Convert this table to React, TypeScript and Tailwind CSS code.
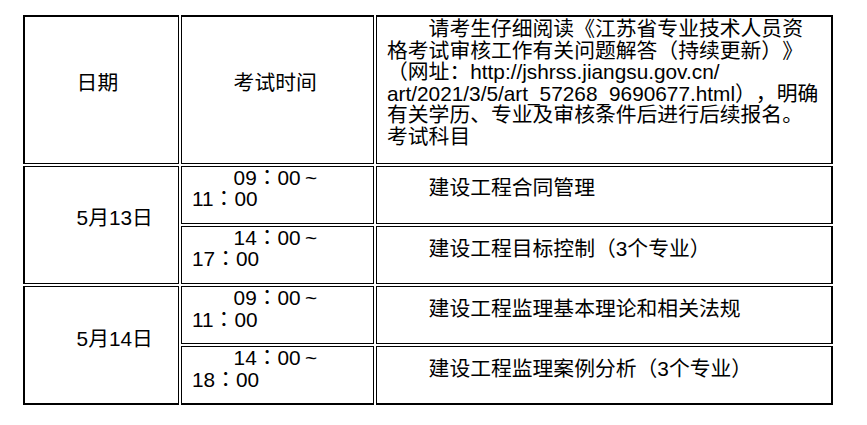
const cell = "border border-black px-[10px] align-middle indent-[2em] text-left font-normal";
const head = `${cell} pt-[1px] pb-[15px] border-t-2`;
const body = `${cell} pt-0 pb-[13px]`;

type Slot = { from: string; to: string; subject: string };
type Day = { date: string; slots: Slot[] };

const days: Day[] = [
  {
    date: "5月13日",
    slots: [
      { from: "09:00", to: "11:00", subject: "建设工程合同管理" },
      { from: "14:00", to: "17:00", subject: "建设工程目标控制（3个专业）" },
    ],
  },
  {
    date: "5月14日",
    slots: [
      { from: "09:00", to: "11:00", subject: "建设工程监理基本理论和相关法规" },
      { from: "14:00", to: "18:00", subject: "建设工程监理案例分析（3个专业）" },
    ],
  },
];

// full-width colon drawn centred, like the source page's font
function Clock({ value }: { value: string }) {
  const [h, m] = value.split(":");
  return (
    <>
      {h}
      <span className="leading-[0]" style={{ fontFamily: '"Noto Sans CJK TC", sans-serif' }}>
        ：
      </span>
      {m}
    </>
  );
}

export default function App() {
  return (
    <div
      className="min-h-screen bg-white text-black text-[20.8px] leading-[21.6px] [text-spacing-trim:space-all] pt-[13px] pl-[21px]"
      style={{ fontFamily: '"Liberation Sans", "Noto Sans CJK SC", sans-serif' }}
    >
      <table className="table-fixed border-separate border-spacing-[2px] w-[814px]">
        <thead>
          <tr>
            <th className={`${head} border-l-2 w-[156px]`}>日期</th>
            <th className={`${head} w-[193px]`}>考试时间</th>
            <th className={`${head} border-r-2 w-[457px]`}>
              请考生仔细阅读《江苏省专业技术人员资格考试审核工作有关问题解答（持续更新）》（网址：http://jshrss.jiangsu.gov.cn/<wbr />art/2021/3/5/art_57268_9690677.html），明确有关学历、专业及审核条件后进行后续报名。
              <br />
              考试科目
            </th>
          </tr>
        </thead>
        <tbody>
          {days.map((day, di) => {
            const lastDay = di === days.length - 1;
            return day.slots.map((slot, si) => {
              const lastRow = lastDay && si === day.slots.length - 1;
              return (
                <tr key={`${day.date}-${si}`}>
                  {si === 0 && (
                    <td
                      rowSpan={day.slots.length}
                      className={`${body} border-l-2 ${lastDay ? "border-b-2" : ""}`}
                    >
                      {day.date}
                    </td>
                  )}
                  <td className={`${body} ${lastRow ? "border-b-2" : ""}`}>
                    <Clock value={slot.from} />
                    <span className="inline-block w-[1em] indent-0 text-center leading-[0]">~</span>
                    <br />
                    <Clock value={slot.to} />
                  </td>
                  <td className={`${body} border-r-2 ${lastRow ? "border-b-2" : ""}`}>
                    {slot.subject}
                  </td>
                </tr>
              );
            });
          })}
        </tbody>
      </table>
      <p className="mt-[18px] indent-[2em] w-[814px]">
        （二）报名时间：考生须在规定时间内登录网站完成报名。
      </p>
    </div>
  );
}
